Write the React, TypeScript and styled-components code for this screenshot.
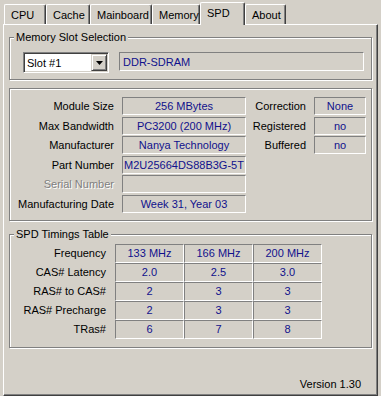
import React from 'react'
import styled, { createGlobalStyle } from 'styled-components'

const GlobalStyle = createGlobalStyle`
  html, body {
    margin: 0;
    padding: 0;
    background: #d4d0c8;
  }
  body {
    font-family: 'Liberation Sans', Arial, sans-serif;
    font-size: 11px;
    color: #000;
  }
  * {
    box-sizing: border-box;
  }
`

const Window = styled.div`
  width: 381px;
  height: 396px;
  padding: 2px 3px 0 3px;
  display: flex;
  flex-direction: column;
  background: #d4d0c8;
  overflow: hidden;
`

const TabRow = styled.div`
  display: flex;
  align-items: flex-end;
  height: 22px;
  padding-left: 1px;
  position: relative;
  z-index: 1;
`

const Tab = styled.div<{ $active?: boolean; $w: number }>`
  width: ${(p) => p.$w}px;
  height: ${(p) => (p.$active ? 23 : 20)}px;
  margin-bottom: ${(p) => (p.$active ? -1 : 0)}px;
  padding: 3px 0 0 6px;
  line-height: 14px;
  background: #d4d0c8;
  border-top: 1px solid #fff;
  border-left: 1px solid #fff;
  border-right: 1px solid #404040;
  box-shadow: inset -1px 0 0 #808080;
  border-top-left-radius: 2px;
  border-top-right-radius: 2px;
  white-space: nowrap;
`

const Panel = styled.div`
  flex: 1;
  display: flex;
  flex-direction: column;
  padding: 12px 5px 0 5px;
  border-top: 1px solid #fff;
  border-left: 1px solid #fff;
  border-right: 1px solid #404040;
  border-bottom: 1px solid #404040;
  box-shadow: inset -1px -1px 0 #808080;
`

const Group = styled.div`
  position: relative;
  border: 1px solid #808080;
  box-shadow: inset 1px 1px 0 #fff, 1px 1px 0 #fff;
`

const Legend = styled.span`
  position: absolute;
  top: -7px;
  left: 4px;
  padding: 0 2px;
  line-height: 13px;
  background: #d4d0c8;
  white-space: nowrap;
`

const SlotGroup = styled(Group)`
  display: flex;
  align-items: flex-start;
  gap: 10px;
  padding: 14px 7px 6px 13px;
`

const Combo = styled.div`
  width: 86px;
  height: 21px;
  display: flex;
  align-items: center;
  background: #fff;
  border: 1px solid;
  border-color: #808080 #fff #fff #808080;
  box-shadow: inset 1px 1px 0 #404040, inset -1px -1px 0 #d4d0c8;
  padding: 1px 1px 1px 3px;
`

const ComboText = styled.span`
  flex: 1;
  line-height: 14px;
`

const ComboButton = styled.div`
  width: 16px;
  height: 17px;
  display: flex;
  align-items: center;
  justify-content: center;
  background: #d4d0c8;
  border: 1px solid;
  border-color: #d4d0c8 #404040 #404040 #d4d0c8;
  box-shadow: inset 1px 1px 0 #fff, inset -1px -1px 0 #808080;
`

const Field = styled.div<{ $align?: 'left' | 'center' }>`
  height: 100%;
  display: flex;
  align-items: center;
  justify-content: ${(p) => (p.$align === 'left' ? 'flex-start' : 'center')};
  padding: 0 ${(p) => (p.$align === 'left' ? '3px' : '0')};
  color: #10108c;
  background: #d4d0c8;
  border: 1px solid;
  border-color: #808080 #fff #fff #808080;
  white-space: nowrap;
  overflow: visible;
`

const TypeField = styled(Field)`
  flex: 1;
  height: 19px;
`

const ModuleGroup = styled(Group)`
  margin-top: 8px;
  padding: 8px 0 7px 0;
  display: flex;
  gap: 8px;
`

const InfoGrid = styled.div<{ $label: number; $field: number }>`
  display: grid;
  grid-template-columns: ${(p) => p.$label}px ${(p) => p.$field}px;
  grid-auto-rows: 18px;
  column-gap: 8px;
  row-gap: 1.5px;
  align-content: start;
`

const Label = styled.div<{ $disabled?: boolean }>`
  display: flex;
  align-items: center;
  justify-content: flex-end;
  white-space: nowrap;
  color: ${(p) => (p.$disabled ? '#808080' : '#000')};
  text-shadow: ${(p) => (p.$disabled ? '1px 1px 0 #fff' : 'none')};
`

const TimingGroup = styled(Group)`
  margin-top: 13px;
  padding: 9px 0 8px 0;
`

const TimingGrid = styled.div`
  display: grid;
  grid-template-columns: 105px repeat(3, 69px);
  grid-auto-rows: 19px;
`

const TimingLabel = styled(Label)`
  padding-right: 9px;
`

const Cell = styled(Field)``

const Footer = styled.div`
  flex: 1;
  display: flex;
  align-items: flex-end;
  justify-content: flex-end;
  padding: 0 11px 4px 0;
  line-height: 13px;
`

const tabs = [
  { name: 'CPU', w: 42 },
  { name: 'Cache', w: 44 },
  { name: 'Mainboard', w: 62 },
  { name: 'Memory', w: 48 },
  { name: 'SPD', w: 45, active: true },
  { name: 'About', w: 41 },
]

const moduleRows = [
  { label: 'Module Size', value: '256 MBytes' },
  { label: 'Max Bandwidth', value: 'PC3200 (200 MHz)' },
  { label: 'Manufacturer', value: 'Nanya Technology' },
  { label: 'Part Number', value: 'M2U25664DS88B3G-5T' },
  { label: 'Serial Number', value: '', disabled: true },
  { label: 'Manufacturing Date', value: 'Week 31, Year 03' },
]

const flagRows = [
  { label: 'Correction', value: 'None' },
  { label: 'Registered', value: 'no' },
  { label: 'Buffered', value: 'no' },
]

const timings = [
  { label: 'Frequency', values: ['133 MHz', '166 MHz', '200 MHz'] },
  { label: 'CAS# Latency', values: ['2.0', '2.5', '3.0'] },
  { label: 'RAS# to CAS#', values: ['2', '3', '3'] },
  { label: 'RAS# Precharge', values: ['2', '3', '3'] },
  { label: 'TRas#', values: ['6', '7', '8'] },
]

const App: React.FC = () => {
  return (
    <>
      <GlobalStyle />
      <Window>
        <TabRow>
          {tabs.map((t) => (
            <Tab key={t.name} $w={t.w} $active={t.active}>
              {t.name}
            </Tab>
          ))}
        </TabRow>
        <Panel>
          <SlotGroup>
            <Legend>Memory Slot Selection</Legend>
            <Combo>
              <ComboText>Slot #1</ComboText>
              <ComboButton>
                <svg width='7' height='4' viewBox='0 0 7 4'>
                  <polygon points='0,0 7,0 3.5,4' fill='#000' />
                </svg>
              </ComboButton>
            </Combo>
            <TypeField $align='left'>DDR-SDRAM</TypeField>
          </SlotGroup>

          <ModuleGroup>
            <InfoGrid $label={104} $field={124}>
              {moduleRows.map((r) => (
                <React.Fragment key={r.label}>
                  <Label $disabled={r.disabled}>{r.label}</Label>
                  <Field>{r.value}</Field>
                </React.Fragment>
              ))}
            </InfoGrid>
            <InfoGrid $label={52} $field={52}>
              {flagRows.map((r) => (
                <React.Fragment key={r.label}>
                  <Label>{r.label}</Label>
                  <Field>{r.value}</Field>
                </React.Fragment>
              ))}
            </InfoGrid>
          </ModuleGroup>

          <TimingGroup>
            <Legend>SPD Timings Table</Legend>
            <TimingGrid>
              {timings.map((r) => (
                <React.Fragment key={r.label}>
                  <TimingLabel>{r.label}</TimingLabel>
                  {r.values.map((v, i) => (
                    <Cell key={i}>{v}</Cell>
                  ))}
                </React.Fragment>
              ))}
            </TimingGrid>
          </TimingGroup>

          <Footer>Version 1.30</Footer>
        </Panel>
      </Window>
    </>
  )
}

export default App
